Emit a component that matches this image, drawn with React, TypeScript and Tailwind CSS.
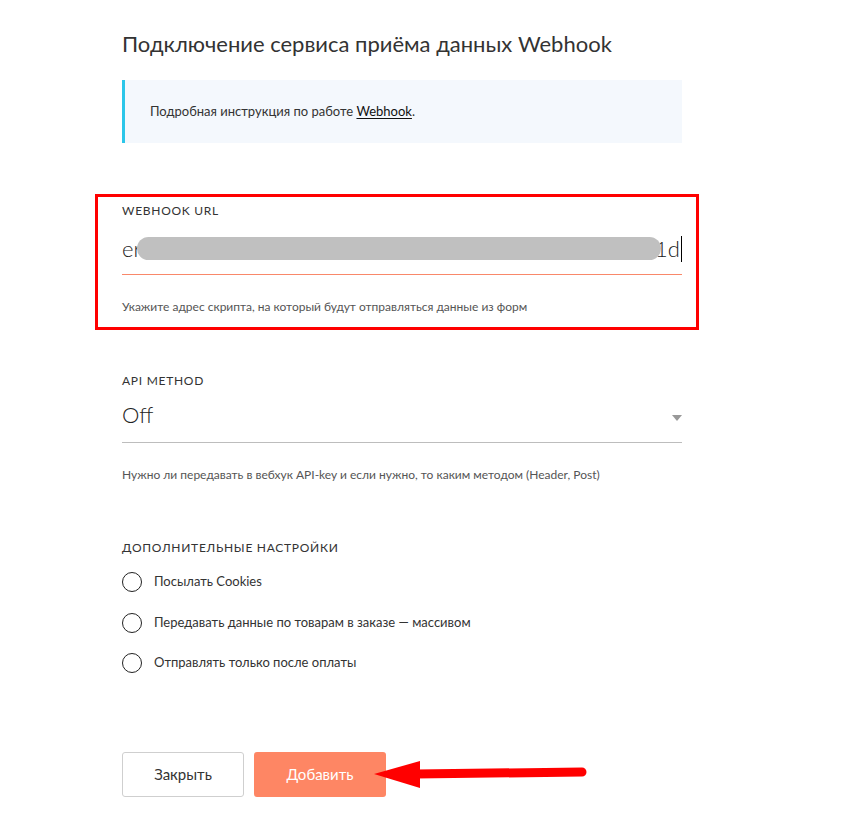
import { useState } from 'react'

const options = [
  'Посылать Cookies',
  'Передавать данные по товарам в заказе — массивом',
  'Отправлять только после оплаты',
]

export default function App() {
  const [checked, setChecked] = useState<boolean[]>([false, false, false])

  return (
    <div className="relative min-h-[832px] bg-white font-['Lato',sans-serif] text-[#222]">
      <div className="ml-[122px] w-[560px] pt-[29px]">
        <h1 className="text-[22px] leading-[30px] text-[#333]">
          Подключение сервиса приёма данных Webhook
        </h1>

        {/* instruction note */}
        <div className="mt-[21px] flex h-[63px] items-center border-l-[3px] border-[#2bc6e9] bg-[#f4f8fd] pl-[25px] text-[13px] text-[#333]">
          <span>
            Подробная инструкция по работе{' '}
            <a href="#" className="text-[#111] underline underline-offset-2">
              Webhook
            </a>
            .
          </span>
        </div>

        {/* webhook url, marked in red */}
        <div className="-ml-[27px] mt-[51px] w-[604px] border-[3px] border-[#ff0000] pb-[12px] pl-[24px] pr-[14px] pt-[6px]">
          <div className="text-[12px] leading-[16px] tracking-[0.06em] text-[#333]">WEBHOOK URL</div>
          <div className="relative mt-[14px] flex h-[42px] items-center border-b border-[#f9886a] pb-[10px]">
            <span className="text-[22px] font-light text-[#222]">er</span>
            <div className="absolute left-[15px] top-[4px] h-[23px] w-[524px] rounded-full bg-[#c0c0c0]" />
            <span className="ml-auto text-[22px] font-light text-[#222]">1d</span>
            <span className="ml-[1px] h-[26px] w-px bg-black" />
          </div>
          <p className="mt-[24px] text-[12px] leading-[16px] text-[#555]">
            Укажите адрес скрипта, на который будут отправляться данные из форм
          </p>
        </div>

        {/* api method */}
        <div className="mt-[43px] text-[12px] leading-[16px] tracking-[0.06em] text-[#333]">API METHOD</div>
        <div className="flex h-[54px] items-center justify-between border-b border-[#bdbdbd] pb-[2px]">
          <span className="text-[22px] font-light text-[#222]">Off</span>
          <svg width="10" height="6" viewBox="0 0 10 6" className="mt-[6px]">
            <path d="M0 0h10L5 6z" fill="#999" />
          </svg>
        </div>
        <p className="mt-[24px] text-[12px] leading-[16px] text-[#555]">
          Нужно ли передавать в вебхук API-key и если нужно, то каким методом (Header, Post)
        </p>

        {/* extra settings */}
        <div className="mt-[57px] text-[12px] leading-[16px] tracking-[0.06em] text-[#333]">
          ДОПОЛНИТЕЛЬНЫЕ НАСТРОЙКИ
        </div>
        <div className="mt-[14px] flex flex-col gap-[16.5px]">
          {options.map((label, i) => (
            <label key={i} className="flex h-[24px] cursor-pointer items-center gap-[12px]">
              <button
                type="button"
                onClick={() => setChecked(checked.map((c, j) => (j === i ? !c : c)))}
                className="flex h-[20px] w-[20px] items-center justify-center rounded-full border-[1.5px] border-[#222]"
              >
                {checked[i] && <span className="h-[10px] w-[10px] rounded-full bg-[#222]" />}
              </button>
              <span className="text-[13px] text-[#333]">{label}</span>
            </label>
          ))}
        </div>

        {/* buttons */}
        <div className="mt-[77px] flex gap-[10px] pb-[35px]">
          <button className="h-[45px] w-[122px] rounded-[3px] border border-[#cfcfcf] bg-white text-[15px] text-[#333]">
            Закрыть
          </button>
          <button className="h-[45px] w-[132px] rounded-[3px] bg-[#fe8664] text-[15px] text-white">
            Добавить
          </button>
        </div>
      </div>

      {/* annotation arrow */}
      <svg className="absolute left-[370px] top-[755px]" width="225" height="40" viewBox="0 0 225 40">
        <line x1="46" y1="19" x2="212" y2="17" stroke="#ff0000" strokeWidth="9" strokeLinecap="round" />
        <polygon points="4,19 50,6 50,33" fill="#ff0000" />
      </svg>
    </div>
  )
}
